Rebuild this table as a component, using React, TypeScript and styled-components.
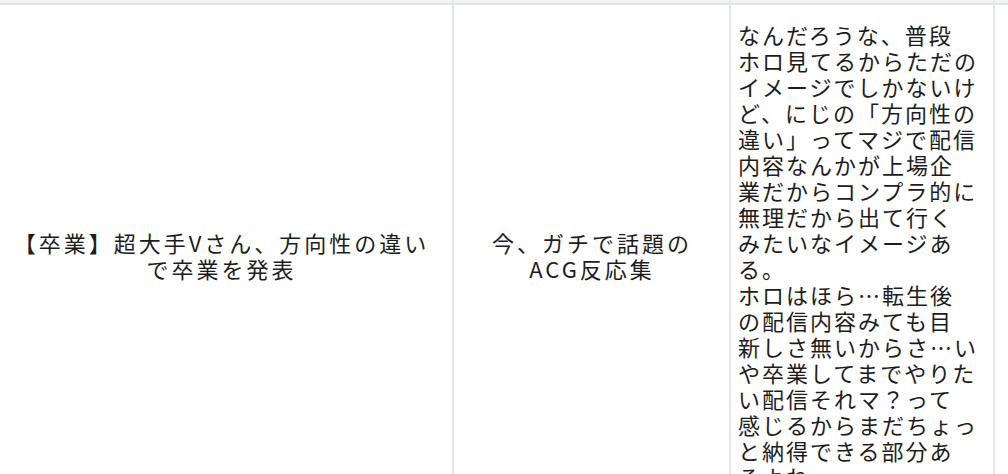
import React from "react";
import styled, { createGlobalStyle } from "styled-components";

const GlobalStyle = createGlobalStyle`
  html, body {
    margin: 0;
    padding: 0;
    background: #ffffff;
    overflow: hidden;
  }
  body {
    font-family: "Noto Sans CJK JP", "Noto Sans", sans-serif;
    color: #1c1c1c;
  }
`;

const Viewport = styled.div`
  width: 1008px;
  height: 474px;
  overflow: hidden;
  background: #ffffff;
`;

const Table = styled.table`
  border-collapse: collapse;
  table-layout: fixed;
  width: 1060px;
  margin-left: -12px;
`;

const PrevRow = styled.tr`
  height: 3px;
`;

const PrevCell = styled.td`
  height: 3px;
  padding: 0;
  background: #f3f4f6;
  border-left: 2px solid #e2e5e9;
  border-right: 2px solid #e2e5e9;
  border-bottom: 2px solid #e2e5e9;
`;

const Cell = styled.td<{ $align?: "center" | "left"; $spacing?: number }>`
  padding: 16px 6px 16px 7px;
  border: 2px solid #e2e5e9;
  vertical-align: middle;
  text-align: ${(p) => p.$align ?? "center"};
  font-size: 22px;
  letter-spacing: ${(p) => p.$spacing ?? 2}px;
  line-height: 26px;
  font-weight: 400;
  white-space: nowrap;
`;

const Line = styled.span`
  display: block;
  height: 26px;
`;

const thread = [
  "なんだろうな、普段",
  "ホロ見てるからただの",
  "イメージでしかないけ",
  "ど、にじの「方向性の",
  "違い」ってマジで配信",
  "内容なんかが上場企",
  "業だからコンプラ的に",
  "無理だから出て行く",
  "みたいなイメージあ",
  "る。",
  "ホロはほら…転生後",
  "の配信内容みても目",
  "新しさ無いからさ…い",
  "や卒業してまでやりた",
  "い配信それマ？って",
  "感じるからまだちょっ",
  "と納得できる部分あ",
  "るよね",
];

const Lines: React.FC<{ lines: string[] }> = ({ lines }) => (
  <>
    {lines.map((l, i) => (
      <Line key={i}>{l}</Line>
    ))}
  </>
);

export default function App() {
  return (
    <>
      <GlobalStyle />
      <Viewport>
        <Table>
          <colgroup>
            <col style={{ width: 464 }} />
            <col style={{ width: 277 }} />
            <col style={{ width: 264 }} />
            <col style={{ width: 55 }} />
          </colgroup>
          <tbody>
            <PrevRow>
              <PrevCell />
              <PrevCell />
              <PrevCell />
              <PrevCell />
            </PrevRow>
            <tr>
              <Cell $spacing={3}>
                <Lines lines={["【卒業】超大手Vさん、方向性の違い", "で卒業を発表"]} />
              </Cell>
              <Cell $spacing={3}>
                <Lines lines={["今、ガチで話題の", "ACG反応集"]} />
              </Cell>
              <Cell $align="left">
                <Lines lines={thread} />
              </Cell>
              <Cell />
            </tr>
          </tbody>
        </Table>
      </Viewport>
    </>
  );
}
